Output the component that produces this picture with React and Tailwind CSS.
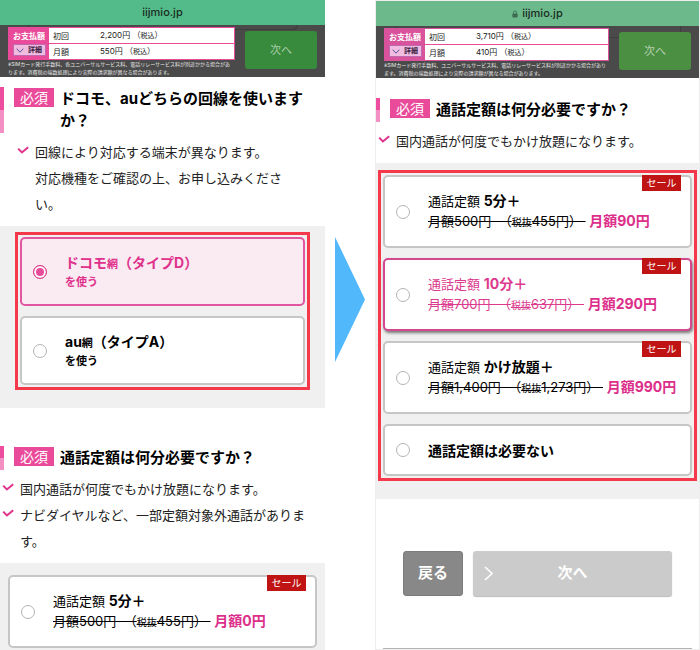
import React, { useState } from "react";
import clsx from "clsx";

const plans = [
  { id: "p5", name: "5分＋", price: "500", net: "455", sale: "90" },
  { id: "p10", name: "10分＋", price: "700", net: "637", sale: "290", active: true },
  { id: "free", name: "かけ放題＋", price: "1,400", net: "1,273", sale: "990" },
];

const LockIcon = () => (
  <svg viewBox="0 0 8 10" className="h-2 w-[6px]" aria-hidden="true">
    <path d="M2 4.5V3a2 2 0 0 1 4 0v1.5" fill="none" stroke="#3c6b51" strokeWidth="1.2" />
    <rect x="0.5" y="4.2" width="7" height="5.6" rx="1" fill="#3c6b51" />
  </svg>
);

const CheckMark = () => (
  <svg viewBox="0 0 12 9" className="mt-[7px] h-[9px] w-3 shrink-0" aria-hidden="true">
    <path d="M1.2 2.6 L4.9 6.4 L11.2 1.2" fill="none" stroke="#e0318b" strokeWidth="2" />
  </svg>
);

const SiteHeader = ({ secure, first, monthly, note }) => (
  <header>
    <div
      className={clsx(
        "flex h-[25px] items-center justify-center gap-1 text-[11px] font-medium text-[#1b2b22]",
        secure ? "bg-[#6cb98c]" : "bg-[#52bb89]"
      )}
    >
      {secure && <LockIcon />}
      <span>iijmio.jp</span>
    </div>
    <div className="relative flex h-[52px] items-start gap-[10px] bg-[#4a4a4a] px-2">
      {/* page content dimmed behind the bar */}
      <div
        className={clsx(
          "absolute top-0 rounded-b border border-t-0 border-[#3e3e3e]",
          secure ? "right-[18px] left-5 h-3" : "right-7 left-7 h-[5px]"
        )}
      />
      <div className="relative min-w-0 flex-1 pt-[2px]">
        <table
          className={clsx(
            "w-full table-fixed border-separate border-spacing-0 border bg-white text-[8px] leading-[14px] text-[#222]",
            secure ? "border-[#d9529c]" : "border-[#e94b9a]"
          )}
        >
          <tbody>
            <tr>
              <th
                rowSpan={2}
                className={clsx(
                  "w-10 p-0 align-top font-bold text-white",
                  secure ? "bg-[#d9529c]" : "bg-[#e94b9a]"
                )}
              >
                <div className="h-4 leading-4">お支払額</div>
                <button
                  type="button"
                  className="mx-auto flex h-3 w-[33px] items-center justify-center gap-1 border border-[#c068b0] bg-[#f0bce0] text-[7px] leading-[10px] text-[#3a2040]"
                >
                  <svg viewBox="0 0 8 5" className="h-[5px] w-2" aria-hidden="true">
                    <path d="M0.7 0.7 4 4.2 7.3 0.7" fill="none" stroke="#54589c" />
                  </svg>
                  詳細
                </button>
              </th>
              <td className="w-[51px] border-b border-[#e94b9a] p-0 pl-1">初回</td>
              <td className="border-b border-[#e94b9a] p-0">
                {first}円 （<span className="text-[7px]">税込</span>）
              </td>
            </tr>
            <tr>
              <td className="p-0 pl-1">月額</td>
              <td className="p-0">
                {monthly}円 （<span className="text-[7px]">税込</span>）
              </td>
            </tr>
          </tbody>
        </table>
        <p className="text-[5px] leading-[8px] text-[#e8e8e8]">{note}</p>
      </div>
      <button
        type="button"
        className={clsx(
          "relative mt-[6px] h-[38px] w-[72px] rounded-[3px] text-[11px]",
          secure ? "bg-[#4a8f42] text-[#b5cfb0]" : "bg-[#388a3c] text-[#a9cfaa]"
        )}
      >
        次へ
      </button>
    </div>
  </header>
);

const Heading = ({ children, className }) => (
  <div className={clsx("flex items-stretch pr-3", className)}>
    <div className="w-1 shrink-0 bg-linear-to-b from-[#ee4d9f] from-50% to-[#f48fc3] to-50%" />
    <div className="flex items-start py-px pl-[10px]">
      <span className="h-[19px] w-10 shrink-0 bg-[#e94b9a] text-center text-[14px] leading-[19px] text-white">
        必須
      </span>
      <h2 className="pl-[6px] text-[15px] leading-[22px] font-bold text-black">{children}</h2>
    </div>
  </div>
);

const Notes = ({ items, className }) => (
  <ul className={clsx("mt-[6px] mb-[9px] pr-3 pl-[2px] text-[13px] leading-[26px] text-[#222]", className)}>
    {items.map((item, i) => (
      <li key={i} className="flex items-start gap-[6px]">
        <CheckMark />
        <span>{item}</span>
      </li>
    ))}
  </ul>
);

const OptionCard = ({ name, value, checked, onChange, sale, className, children }) => (
  <label
    className={clsx(
      "relative flex items-center gap-[18px] rounded-[5px] border-2 pl-[11px] whitespace-nowrap",
      className
    )}
  >
    <input
      type="radio"
      name={name}
      value={value}
      checked={checked}
      onChange={() => onChange(value)}
      className="size-[14px] shrink-0 appearance-none rounded-full border border-[#b4b4b4] bg-white checked:border-[#e0318b] checked:bg-[#e94b9a] checked:shadow-[inset_0_0_0_2px_#fff]"
    />
    <span>{children}</span>
    {sale && (
      <span className="absolute -top-[2px] right-[9px] h-4 w-[39px] bg-[#c01414] text-center text-[10px] leading-4 text-white">
        セール
      </span>
    )}
  </label>
);

const PlanText = ({ plan }) => (
  <span className="block text-[13px] leading-5">
    <span className="block">
      通話定額 <b className="text-[14px]">{plan.name}</b>
    </span>
    <span className="block">
      <s>
        月額{plan.price}円&nbsp; （<span className="text-[10px]">税抜</span>
        {plan.net}円）&nbsp;
      </s>{" "}
      <b className="text-[14px] text-[#dc2f8a]">月額{plan.sale}円</b>
    </span>
  </span>
);

const CarrierText = ({ carrier, type }) => (
  <span className="block pt-[2px] leading-[18px] font-bold">
    <span className="block text-[14px]">
      {carrier}
      <span className="text-[11px]">網</span>（タイプ{type}）
    </span>
    <span className="block text-[11px]">を使う</span>
  </span>
);

const idleCard = "border-[#c6c6c6] bg-white text-black";

export default function App() {
  const [carrier, setCarrier] = useState("docomo");
  const [firstPlan, setFirstPlan] = useState("");
  const [plan, setPlan] = useState("");

  return (
    <div className="grid min-h-screen grid-cols-[minmax(0,1fr)_50px_minmax(0,1fr)] overflow-hidden bg-white font-['Inter','Noto_Sans_CJK_JP',sans-serif]">
      {/* Step 1: carrier */}
      <main className="flex flex-col">
        <SiteHeader
          first="2,200"
          monthly="550"
          note="※SIMカード発行手数料、各ユニバーサルサービス料、電話リレーサービス料が別途かかる場合があります。消費税の端数処理により実際の請求額が異なる場合があります。"
        />
        <Heading className="mt-[10px]">ドコモ、auどちらの回線を使いますか？</Heading>
        <Notes
          className="mr-5 ml-[15px]"
          items={[
            <>
              回線により対応する端末が異なります。
              <br />
              対応機種をご確認の上、お申し込みください。
            </>,
          ]}
        />
        <section className="bg-[#f0f0f0] px-[15px] pt-[6px] pb-[18px]">
          <div className="flex flex-col gap-[10px] border-3 border-[#f5384a] p-[2px]">
            <OptionCard
              name="carrier"
              value="docomo"
              checked={carrier === "docomo"}
              onChange={setCarrier}
              className="h-[69px] border-[#e255a0] bg-[#faeaf2] text-[#e0318b]"
            >
              <CarrierText carrier="ドコモ" type="D" />
            </OptionCard>
            <OptionCard
              name="carrier"
              value="au"
              checked={carrier === "au"}
              onChange={setCarrier}
              className={clsx("h-[69px]", idleCard)}
            >
              <CarrierText carrier="au" type="A" />
            </OptionCard>
          </div>
        </section>

        <Heading className="mt-[38px]">通話定額は何分必要ですか？</Heading>
        <Notes
          items={[
            "国内通話が何度でもかけ放題になります。",
            "ナビダイヤルなど、一部定額対象外通話があります。",
          ]}
        />
        <section className="flex-1 bg-[#f0f0f0] px-2 pt-3">
          <OptionCard
            name="first-plan"
            value="p5"
            checked={firstPlan === "p5"}
            onChange={setFirstPlan}
            sale
            className={clsx("h-[73px]", idleCard)}
          >
            <PlanText plan={{ ...plans[0], sale: "0" }} />
          </OptionCard>
        </section>
      </main>

      <div className="flex justify-center pt-[237px]">
        <svg viewBox="0 0 30 125" className="h-[125px] w-[30px]" aria-hidden="true">
          <path d="M0 0 30 62.5 0 125Z" fill="#50b8fb" />
        </svg>
      </div>

      {/* Step 2: call plan */}
      <main className="flex flex-col border border-[#eee]">
        <SiteHeader
          secure
          first="3,710"
          monthly="410"
          note="※SIMカード発行手数料、ユニバーサルサービス料、電話リレーサービス料が別途かかる場合があります。消費税の端数処理により実際の請求額が異なる場合があります。"
        />
        <Heading className="mt-5">通話定額は何分必要ですか？</Heading>
        <Notes items={["国内通話が何度でもかけ放題になります。"]} />
        <section className="bg-[#f0f0f0] px-[2px] pt-[7px] pb-[18px]">
          <div className="flex flex-col gap-[10px] border-3 border-[#f5384a] p-[2px]">
            {plans.map((p) => (
              <OptionCard
                key={p.id}
                name="plan"
                value={p.id}
                checked={plan === p.id}
                onChange={setPlan}
                sale
                className={clsx(
                  "h-[73px]",
                  p.active
                    ? "border-[#d4488f] bg-white text-[#dc3a8e] shadow-[1px_2px_3px_#777]"
                    : idleCard
                )}
              >
                <PlanText plan={p} />
              </OptionCard>
            ))}
            <OptionCard
              name="plan"
              value="none"
              checked={plan === "none"}
              onChange={setPlan}
              className={clsx("h-[52px]", idleCard)}
            >
              <b className="text-[14px]">通話定額は必要ない</b>
            </OptionCard>
          </div>
        </section>
        <div className="my-[52px] flex gap-[10px] px-[27px] text-[15px] font-bold text-white">
          <button type="button" className="h-[45px] w-[60px] rounded-[3px] border border-[#7c7c7c] bg-[#888]">
            戻る
          </button>
          <button
            type="button"
            className="relative h-[45px] flex-1 rounded-[3px] bg-[#cbcbcb] shadow-[0_1px_1px_#bbb]"
          >
            <svg viewBox="0 0 9 15" className="absolute top-[15px] left-[11px] h-[15px] w-[9px]" aria-hidden="true">
              <path d="M1 1 8 7.5 1 14" fill="none" stroke="#fff" strokeWidth="1.6" />
            </svg>
            次へ
          </button>
        </div>
        <div className="mx-[7px] h-px bg-[#b4b4b4]" />
      </main>
    </div>
  );
}
